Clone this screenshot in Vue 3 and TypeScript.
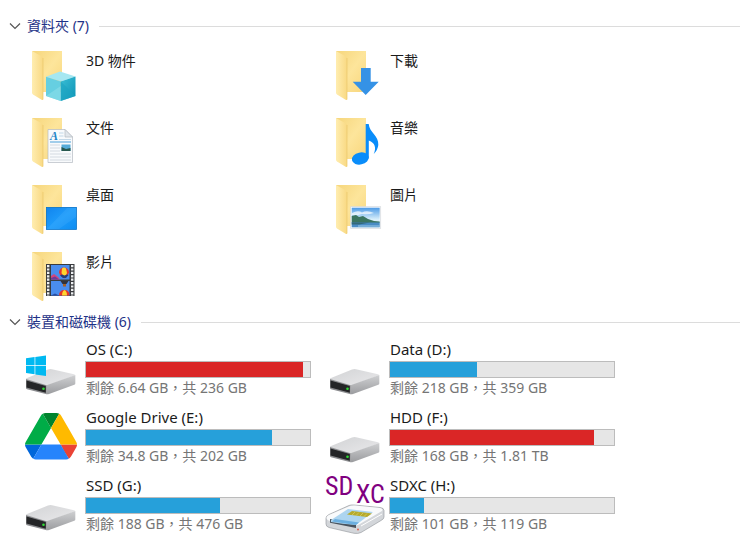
<script setup lang="ts">
import { ref } from 'vue'

type FolderKind = 'objects' | 'downloads' | 'documents' | 'music' | 'desktop' | 'pictures' | 'videos'
type DriveKind = 'system' | 'disk' | 'google' | 'sdxc'

interface Folder {
  kind: FolderKind
  label: string
}

interface Drive {
  kind: DriveKind
  name: string
  free: string
  total: string
  used: number
}

const foldersOpen = ref(true)
const drivesOpen = ref(true)

const folders: Folder[] = [
  { kind: 'objects', label: '3D 物件' },
  { kind: 'downloads', label: '下載' },
  { kind: 'documents', label: '文件' },
  { kind: 'music', label: '音樂' },
  { kind: 'desktop', label: '桌面' },
  { kind: 'pictures', label: '圖片' },
  { kind: 'videos', label: '影片' },
]

const drives: Drive[] = [
  { kind: 'system', name: 'OS (C:)', free: '6.64 GB', total: '236 GB', used: 97 },
  { kind: 'disk', name: 'Data (D:)', free: '218 GB', total: '359 GB', used: 39 },
  { kind: 'google', name: 'Google Drive (E:)', free: '34.8 GB', total: '202 GB', used: 83 },
  { kind: 'disk', name: 'HDD (F:)', free: '168 GB', total: '1.81 TB', used: 91 },
  { kind: 'disk', name: 'SSD (G:)', free: '188 GB', total: '476 GB', used: 60 },
  { kind: 'sdxc', name: 'SDXC (H:)', free: '101 GB', total: '119 GB', used: 15 },
]

const isFull = (drive: Drive): boolean => drive.used >= 90
</script>

<template>
  <main class="explorer">
    <svg class="defs" aria-hidden="true">
      <defs>
        <linearGradient id="back" x1="0" y1="0" x2="1" y2="1">
          <stop offset="0" stop-color="#f6d67c" />
          <stop offset="0.5" stop-color="#fde59b" />
          <stop offset="1" stop-color="#f8d67c" />
        </linearGradient>
        <linearGradient id="flap" x1="0" y1="0" x2="1" y2="0">
          <stop offset="0" stop-color="#ffedb0" />
          <stop offset="1" stop-color="#f9d983" />
        </linearGradient>
        <linearGradient id="screen" x1="0" y1="0" x2="1" y2="1">
          <stop offset="0" stop-color="#1184ee" />
          <stop offset="0.5" stop-color="#1e9cfa" />
          <stop offset="1" stop-color="#0d8df2" />
        </linearGradient>
        <linearGradient id="sky" x1="0" y1="0" x2="0" y2="1">
          <stop offset="0" stop-color="#4d9be6" />
          <stop offset="0.6" stop-color="#d9effb" />
        </linearGradient>
        <linearGradient id="metal" x1="0" y1="0" x2="1" y2="1">
          <stop offset="0" stop-color="#d2d3d5" />
          <stop offset="1" stop-color="#e9e9eb" />
        </linearGradient>
        <linearGradient id="side" x1="0" y1="0" x2="0" y2="1">
          <stop offset="0" stop-color="#cfd0d2" />
          <stop offset="1" stop-color="#9b9c9f" />
        </linearGradient>
        <linearGradient id="cubeRight" x1="0" y1="0" x2="1" y2="1">
          <stop offset="0" stop-color="#3bbfd6" />
          <stop offset="1" stop-color="#0c93b5" />
        </linearGradient>
        <g id="hdd">
          <path d="M2 39.300Q1.500 38.500 3 38L24 29.500Q26 28.800 28 29.200L50 34.200Q51.500 34.800 50.500 35.500L23.500 45.500Z" fill="url(#metal)" />
          <path d="M22.500 45.300L51.300 35V43.500Q51.300 44.300 50.300 44.800L25 54Q23.500 54.500 22.500 54.200Z" fill="url(#side)" />
          <path d="M2 39L22.700 45.200V54.200L3 49.200Q2 48.800 2 48Z" fill="#8b8c8f" />
          <path d="M2.500 40.400L21.800 46V52.700L2.500 47.500Z" fill="#242527" />
          <circle cx="19.500" cy="48.800" r="1.300" fill="#2fdc35" />
        </g>
      </defs>
    </svg>

    <section>
      <h2 class="heading">
        <button type="button" class="toggle" :aria-expanded="foldersOpen" @click="foldersOpen = !foldersOpen">
          <svg class="chevron" :class="{ closed: !foldersOpen }" viewBox="0 0 12 8" aria-hidden="true">
            <path d="M1 1.500L6 6.500L11 1.500" />
          </svg>
          <span>資料夾 (7)</span>
        </button>
      </h2>
      <ul v-if="foldersOpen" class="grid folders">
        <li v-for="folder in folders" :key="folder.kind">
          <button type="button" class="tile">
            <svg class="folder-icon" viewBox="0 -5 54 59" aria-hidden="true">
              <path d="M8 2H38V43H17Z" fill="url(#back)" />
              <path d="M8 2L18 7.500Q19 8.200 19 9.500V50.500Q19 51.400 18 50.900L9 45.500Q8 44.800 8 43.800Z" fill="url(#flap)" />
              <path d="M19 9V50.500" stroke="#eac66c" stroke-width="0.700" />

              <g v-if="folder.kind === 'objects'">
                <path d="M22 27.700L36 22.500L51.500 27.500L36.700 32.500Z" fill="#a5e7f1" />
                <path d="M22 27.700L36.700 32.500V52L22 47Z" fill="#66cfe1" />
                <path d="M51.500 27.500L36.700 32.500V52L51.500 47Z" fill="url(#cubeRight)" />
                <path d="M36.700 32.500L51.500 47L36.700 52Z" fill="#1aa3c2" opacity="0.600" />
                <path d="M22 47L36.700 37V52Z" fill="#8addea" opacity="0.600" />
              </g>

              <path
                v-else-if="folder.kind === 'downloads'"
                d="M33 19H42.700V32.700H50.700L37.700 46L24.700 32.700H33Z"
                fill="#3592e6"
              />

              <g v-else-if="folder.kind === 'documents'">
                <path d="M24 13.500H41L48.500 21V46.500H24Z" fill="#f8fafc" stroke="#b4bac1" stroke-width="0.700" />
                <path d="M41 13.500V21H48.500Z" fill="#e1e6eb" stroke="#b4bac1" stroke-width="0.700" />
                <text class="letter" x="26" y="24">A</text>
                <path d="M35 17H39.500M35 20H39.500M35 23.500H47" stroke="#b4cfe2" stroke-width="0.800" />
                <path d="M26 26H47" stroke="#4aa0d8" stroke-width="1" />
                <path d="M26 29H36M26 32H36M26 35H36M26 38H47M26 41H47M26 44H47" stroke="#cad2da" stroke-width="0.800" />
                <rect x="37.500" y="28.500" width="9" height="6.500" fill="#55acd9" />
                <path d="M37.500 31L42 33L46.500 32V35H37.500Z" fill="#28584f" />
              </g>

              <g v-else-if="folder.kind === 'music'" fill="#0a8dfa">
                <ellipse cx="32.300" cy="42.500" rx="8.500" ry="6" transform="rotate(-12 32.300 42.500)" />
                <path d="M37.700 8H40.700C41.500 17 51 19.500 50.300 29Q49.800 34 45.700 38Q50 28 40.800 24.500V42.500H37.700Z" />
              </g>

              <g v-else-if="folder.kind === 'desktop'">
                <rect x="22.400" y="24.400" width="30" height="22" fill="url(#screen)" stroke="#0872c8" stroke-width="0.800" />
                <path d="M23 46L43 25H52V34L35 46Z" fill="#55b8ff" opacity="0.220" />
              </g>

              <g v-else-if="folder.kind === 'pictures'">
                <rect x="22.700" y="23.700" width="30" height="21.600" fill="#fff" stroke="#d3d8dc" stroke-width="0.700" />
                <rect x="23.700" y="24.700" width="28" height="19.600" fill="url(#sky)" />
                <path d="M24 30Q30 27 34 29.500Q39 27 46 30Q40 32 34 31Q28 33 24 32Z" fill="#fff" opacity="0.700" />
                <rect x="23.700" y="39" width="28" height="5.300" fill="#4a8cc4" />
                <path d="M23.700 33L28 32L31 34L35 33L40 36L46 38L51.700 38.500V39.500H23.700Z" fill="#3b7560" />
                <path d="M23.700 39.500H42L31 41.500H23.700Z" fill="#33697a" />
                <path d="M30 43H51.700" stroke="#9dcbe8" stroke-width="1" />
              </g>

              <g v-else>
                <rect x="22" y="14" width="28.500" height="32" fill="#3a3c3f" />
                <path d="M24.200 15V46M48.200 15V46" stroke="#eef0f2" stroke-width="2.400" stroke-dasharray="2.200 1.200" />
                <rect x="27" y="15" width="18.500" height="14.500" fill="#4a8ded" />
                <rect x="27" y="31" width="18.500" height="14.500" fill="#4a8ded" />
                <path d="M27 26L30 24L34 27L36 29.500H27Z" fill="#d4447c" />
                <path d="M27 28L31 26.500L35 29.500H27Z" fill="#6b3c9b" />
                <path d="M35 22.500A5 5 0 0 1 45 22.500Q44 26 40.500 28.500Q36 26 35 22.500Z" fill="#e7352c" />
                <path d="M38 18.500Q40 16.500 42 18.500L43 23L40.500 28.500L37.500 23Z" fill="#ffd52f" />
                <path d="M36 25.500L38 24.500L40.500 25.500L43 24.500L44.500 25L42 28H39Z" fill="#263e78" />
                <path d="M36.500 31H44.500L42.500 34H38.500Z" fill="#31333b" />
                <path d="M39 34H42V36.500H39Z" fill="#a55f25" />
                <path d="M35 45.500Q35 40 40.500 40Q45.500 40 45.500 45.500Z" fill="#e7352c" />
                <path d="M38 45.500Q38 41 40.500 40Q43 41 43 45.500Z" fill="#ffd52f" />
                <path d="M27 45.500L31 43.500L35 45.500Z" fill="#284da5" />
              </g>
            </svg>
            <span class="label">{{ folder.label }}</span>
          </button>
        </li>
      </ul>
    </section>

    <section>
      <h2 class="heading">
        <button type="button" class="toggle" :aria-expanded="drivesOpen" @click="drivesOpen = !drivesOpen">
          <svg class="chevron" :class="{ closed: !drivesOpen }" viewBox="0 0 12 8" aria-hidden="true">
            <path d="M1 1.500L6 6.500L11 1.500" />
          </svg>
          <span>裝置和磁碟機 (6)</span>
        </button>
      </h2>
      <ul v-if="drivesOpen" class="grid drives">
        <li v-for="drive in drives" :key="drive.name">
          <button type="button" class="tile">
            <svg class="drive-icon" viewBox="0 0 54 58" aria-hidden="true">
              <g v-if="drive.kind === 'google'" transform="translate(1 5) scale(0.596)">
                <path d="m6.600 66.850 3.850 6.650c.8 1.400 1.950 2.500 3.300 3.300l13.750-23.800h-27.500c0 1.550.4 3.100 1.200 4.500z" fill="#0066da" />
                <path d="m43.650 25-13.750-23.800c-1.350.8-2.500 1.900-3.300 3.300l-25.400 44a9.060 9.060 0 0 0 -1.200 4.500h27.500z" fill="#00ac47" />
                <path d="m73.550 76.800c1.350-.8 2.500-1.900 3.300-3.300l1.600-2.750 7.650-13.250c.8-1.400 1.200-2.950 1.200-4.500h-27.502l5.852 11.500z" fill="#ea4335" />
                <path d="m43.650 25 13.750-23.800c-1.350-.8-2.900-1.200-4.500-1.200h-18.500c-1.600 0-3.150.45-4.500 1.200z" fill="#00832d" />
                <path d="m59.800 53h-32.300l-13.750 23.800c1.350.8 2.900 1.200 4.500 1.200h50.800c1.600 0 3.150-.45 4.500-1.200z" fill="#2684fc" />
                <path d="m73.400 26.500-12.700-22c-.8-1.400-1.950-2.500-3.300-3.300l-13.750 23.800 16.150 28h27.450c0-1.550-.4-3.100-1.200-4.500z" fill="#ffba00" />
              </g>

              <g v-else-if="drive.kind === 'sdxc'">
                <path d="M-2 42Q-2 40 1 38.500L21 29.500Q23 28.700 26 29L52 31.500Q56 32 56 34.500V41Q56 43 53 44.500L33 56.500Q30 58 26 57.300L1 51.500Q-2 50.500-2 48Z" fill="#d3d6da" stroke="#8e9297" stroke-width="0.600" />
                <path d="M-1.500 41.500Q-1 39.800 1 39L22 30Q24 29.300 27 29.500L52 32Q55.500 32.800 54 35L31 48.500Q28 50 25 49.500L2 45Q-1.500 44-1.500 41.500Z" fill="#f9fafb" />
                <path d="M2 43L28 47.500V52L2 46.800Z" fill="#49535e" />
                <path d="M3 44L20 33L45 36L28 49Q14 48 3 46Z" fill="#add5f0" />
                <path d="M7 43L31 46.500L28 49L4 45.500Z" fill="#6bafe0" />
                <path d="M24 35L44 37.500L39 41L19 38.500Z" fill="#b6aa2c" />
                <path d="M27 36L24 39M31 36.500L28 39.500M35 37L32 40M39 37.500L36 40.500" stroke="#ddd269" stroke-width="0.700" />
                <path d="M33 50L54 38" stroke="#fff" stroke-width="1" />
                <circle cx="30" cy="53.500" r="0.900" fill="#df5a49" />
                <text class="badge" x="-3" y="19">SD</text>
                <text class="badge" x="28" y="27">XC</text>
              </g>

              <g v-else>
                <use href="#hdd" />
                <g v-if="drive.kind === 'system'" fill="#00b9f1">
                  <path d="M2 18.300L10.600 17V25.300H2ZM11.300 16.900L22 15.400V25.300H11.300ZM2 26H10.600V34.300L2 33ZM11.300 26H22V36L11.300 34.400Z" />
                </g>
              </g>
            </svg>
            <span class="info">
              <span class="name">{{ drive.name }}</span>
              <span
                class="bar"
                role="meter"
                :aria-label="drive.name"
                aria-valuemin="0"
                aria-valuemax="100"
                :aria-valuenow="drive.used"
              >
                <span class="fill" :class="{ full: isFull(drive) }" :style="{ width: drive.used + '%' }"></span>
              </span>
              <span class="space">剩餘 {{ drive.free }}，共 {{ drive.total }}</span>
            </span>
          </button>
        </li>
      </ul>
    </section>
  </main>
</template>

<style>
body {
  margin: 0;
  background: #fff;
}
</style>

<style scoped>
.explorer {
  display: flex;
  flex-direction: column;
  gap: 8px;
  padding-top: 16px;
  font-family: 'Noto Sans', 'Noto Sans CJK TC', sans-serif;
  font-size: 14px;
  line-height: 18px;
  color: #1b1b1b;
}

.defs {
  position: absolute;
  width: 0;
  height: 0;
}

button {
  padding: 0;
  border: 0;
  background: none;
  font: inherit;
  color: inherit;
  text-align: left;
  cursor: default;
}

.heading {
  display: flex;
  align-items: center;
  gap: 10px;
  height: 20px;
  margin: 0 0 8px;
  font-size: 14px;
  font-weight: 400;
  color: #1e3287;
}

.heading::after {
  content: '';
  flex: 1;
  height: 1px;
  background: #dcdcdc;
}

.toggle {
  display: flex;
  align-items: center;
  gap: 6px;
  padding-left: 9px;
  white-space: nowrap;
}

.chevron {
  width: 12px;
  height: 8px;
  fill: none;
  stroke: #555;
  stroke-width: 1.2;
}

.closed {
  transform: rotate(-90deg);
}

.grid {
  display: grid;
  grid-template-columns: repeat(auto-fill, 304px);
  margin: 0;
  padding: 0 0 0 24px;
  list-style: none;
}

.folders {
  row-gap: 8px;
}

.drives {
  row-gap: 10px;
}

.tile {
  display: flex;
  align-items: flex-start;
  width: 100%;
}

.folder-icon,
.drive-icon {
  flex: none;
  display: block;
  width: 54px;
  overflow: visible;
}

.folder-icon {
  height: 59px;
}

.drive-icon {
  height: 58px;
}

.label {
  padding: 8px 0 0 8px;
}

.info {
  display: flex;
  flex-direction: column;
  width: 226px;
  margin-left: 7px;
}

.name,
.space {
  padding-left: 1px;
  white-space: nowrap;
}

.name {
  margin-bottom: 3px;
  font-size: 15px;
}

.bar {
  display: block;
  box-sizing: border-box;
  height: 17px;
  border: 1px solid #bcbcbc;
  background: #e6e6e6;
}

.fill {
  display: block;
  height: 100%;
  background: #26a0da;
}

.fill.full {
  background: #da2626;
}

.space {
  line-height: 20px;
  color: #757575;
}

.badge {
  font-family: 'Roboto Condensed', 'DejaVu Sans Condensed', 'Liberation Sans', sans-serif;
  font-size: 26px;
  font-weight: 400;
  fill: #800080;
}

.letter {
  font-family: 'Liberation Serif', serif;
  font-size: 12px;
  font-style: italic;
  font-weight: 700;
  fill: #2184c7;
}
</style>
